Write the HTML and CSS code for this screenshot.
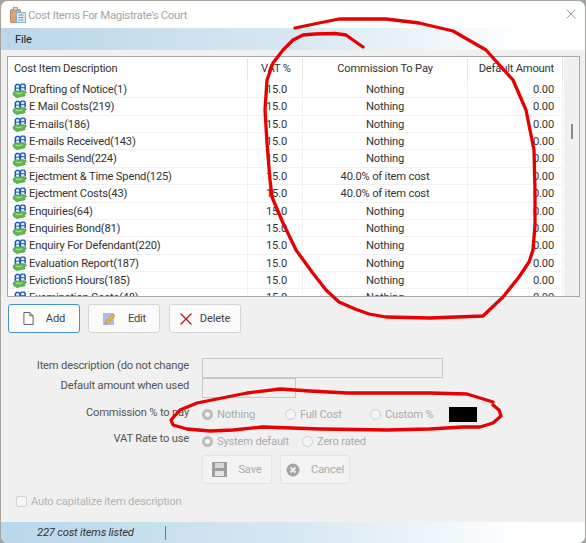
FILE: index.html
```html
<!DOCTYPE html>
<html lang="en">
<head>
<meta charset="utf-8">
<title>Cost Items For Magistrate's Court</title>
<link rel="stylesheet" href="styles.css">
</head>
<body>
<svg class="defs" width="0" height="0" aria-hidden="true">
  <symbol id="item" viewBox="0 0 16 16">
    <path d="M3.500 9V3l1.500-1.500h2L8.500 3v6" fill="#dfeeff" stroke="#1c54b8" stroke-width="1.500"/>
    <path d="M9 8V2.500l1-1.300h3l1 1.300V8" fill="#dfeeff" stroke="#1c54b8" stroke-width="1.500"/>
    <path d="M3.500 5.500h5M9 5h5" stroke="#1c54b8" stroke-width="1"/>
    <path d="M1 11l2.500-3 4 1 3.500-1 4.500 1.500-2 2.500 .5 1.500-9 2-3-2z" fill="#62b94c" stroke="#3d9138" stroke-width=".7"/>
    <path d="M4 10.500l3 1 4-1" fill="none" stroke="#b9e8a3" stroke-width="1"/>
  </symbol>
</svg>
<div class="window">
  <header class="titlebar">
    <svg class="appicon" viewBox="0 0 16 16" width="16" height="16" aria-hidden="true">
      <rect x=".5" y="2.500" width="10" height="13" rx="1" fill="#dfa177" stroke="#c08258"/>
      <rect x="3.500" y="0.500" width="4" height="3" fill="#d8c8b8" stroke="#9a8a7a" stroke-width=".7"/>
      <rect x="6.500" y="5.500" width="9" height="10" fill="#e4e8ec" stroke="#7fb2d0"/>
      <path d="M8.500 8h5M8.500 10.500h5M8.500 13h5" stroke="#858f98"/>
    </svg>
    <span class="title">Cost Items For Magistrate's Court</span>
    <svg class="close" viewBox="0 0 10 10" width="10" height="10" aria-hidden="true"><path d="M.5.5l9 9M9.500.5l-9 9" stroke="#9a9a9a" stroke-width="1"/></svg>
  </header>
  <nav class="menubar"><span>File</span></nav>

  <section class="list">
    <div class="listmain">
      <div class="row head">
        <div class="c1">Cost Item Description</div><div class="c2">VAT %</div><div class="c3">Commission To Pay</div><div class="c4">Default Amount</div>
      </div>
      <div class="rows">
        <div class="row"><div class="c1"><svg class="ico"><use href="#item"/></svg>Drafting of Notice(1)</div><div class="c2">15.0</div><div class="c3">Nothing</div><div class="c4">0.00</div></div>
        <div class="row"><div class="c1"><svg class="ico"><use href="#item"/></svg>E Mail Costs(219)</div><div class="c2">15.0</div><div class="c3">Nothing</div><div class="c4">0.00</div></div>
        <div class="row"><div class="c1"><svg class="ico"><use href="#item"/></svg>E-mails(186)</div><div class="c2">15.0</div><div class="c3">Nothing</div><div class="c4">0.00</div></div>
        <div class="row"><div class="c1"><svg class="ico"><use href="#item"/></svg>E-mails Received(143)</div><div class="c2">15.0</div><div class="c3">Nothing</div><div class="c4">0.00</div></div>
        <div class="row"><div class="c1"><svg class="ico"><use href="#item"/></svg>E-mails Send(224)</div><div class="c2">15.0</div><div class="c3">Nothing</div><div class="c4">0.00</div></div>
        <div class="row"><div class="c1"><svg class="ico"><use href="#item"/></svg>Ejectment &amp; Time Spend(125)</div><div class="c2">15.0</div><div class="c3">40.0% of item cost</div><div class="c4">0.00</div></div>
        <div class="row"><div class="c1"><svg class="ico"><use href="#item"/></svg>Ejectment Costs(43)</div><div class="c2">15.0</div><div class="c3">40.0% of item cost</div><div class="c4">0.00</div></div>
        <div class="row"><div class="c1"><svg class="ico"><use href="#item"/></svg>Enquiries(64)</div><div class="c2">15.0</div><div class="c3">Nothing</div><div class="c4">0.00</div></div>
        <div class="row"><div class="c1"><svg class="ico"><use href="#item"/></svg>Enquiries Bond(81)</div><div class="c2">15.0</div><div class="c3">Nothing</div><div class="c4">0.00</div></div>
        <div class="row"><div class="c1"><svg class="ico"><use href="#item"/></svg>Enquiry For Defendant(220)</div><div class="c2">15.0</div><div class="c3">Nothing</div><div class="c4">0.00</div></div>
        <div class="row"><div class="c1"><svg class="ico"><use href="#item"/></svg>Evaluation Report(187)</div><div class="c2">15.0</div><div class="c3">Nothing</div><div class="c4">0.00</div></div>
        <div class="row"><div class="c1"><svg class="ico"><use href="#item"/></svg>Eviction5 Hours(185)</div><div class="c2">15.0</div><div class="c3">Nothing</div><div class="c4">0.00</div></div>
        <div class="row"><div class="c1"><svg class="ico"><use href="#item"/></svg>Examination Costs(48)</div><div class="c2">15.0</div><div class="c3">Nothing</div><div class="c4">0.00</div></div>
      </div>
    </div>
    <div class="scrollbar"><div class="thumb"></div></div>
  </section>

  <div class="actions">
    <button class="btn primary" type="button">
      <svg viewBox="0 0 12 14" width="11" height="13" aria-hidden="true"><path d="M1 .5h6.500l3.500 3.500v9.500H1z" fill="#fff" stroke="#555"/><path d="M7.500.5V4H11" fill="none" stroke="#555"/></svg>
      <span>Add</span>
    </button>
    <button class="btn" type="button">
      <svg viewBox="0 0 14 14" width="14" height="14" aria-hidden="true"><rect x="1" y="1" width="11" height="12" fill="#a9bde6"/><path d="M3 12l1-3 7-7 2 2-7 7z" fill="#efb54a" stroke="#c98a26" stroke-width=".7"/></svg>
      <span>Edit</span>
    </button>
    <button class="btn del" type="button">
      <svg viewBox="0 0 12 12" width="12" height="12" aria-hidden="true"><path d="M.5.500l11 11M11.500.5l-11 11" stroke="#b01e1e" stroke-width="1.300"/></svg>
      <span>Delete</span>
    </button>
  </div>

  <form class="form">
    <div class="frow r1"><label>Item description (do not change</label><div class="field wide"></div></div>
    <div class="frow r2"><label>Default amount when used</label><div class="field short"></div></div>
    <div class="frow r3">
      <label>Commission % to pay</label>
      <div class="radios">
        <span class="opt o1"><i class="radio on"></i>Nothing</span>
        <span class="opt o2"><i class="radio"></i>Full Cost</span>
        <span class="opt o3"><i class="radio"></i>Custom %</span>
        <span class="swatch"></span>
      </div>
    </div>
    <div class="frow r4">
      <label>VAT Rate to use</label>
      <div class="radios">
        <span class="opt o4"><i class="radio on"></i>System default</span>
        <span class="opt"><i class="radio"></i>Zero rated</span>
      </div>
    </div>
    <div class="frow r5">
      <label></label>
      <div class="savebtns">
        <button class="btn off" type="button">
          <svg viewBox="0 0 15 15" width="15" height="15" aria-hidden="true"><path d="M0 0h15v15H0z" fill="#9c9c9c"/><rect x="3" y="1" width="9" height="5" fill="#d6d6d6"/><rect x="3" y="9" width="9" height="5" fill="#e2e2e2"/></svg>
          <span>Save</span>
        </button>
        <button class="btn off" type="button">
          <svg viewBox="0 0 14 14" width="14" height="14" aria-hidden="true"><circle cx="7" cy="7" r="6.500" fill="#a3a3a3"/><path d="M4.500 4.500l5 5M9.500 4.500l-5 5" stroke="#eee" stroke-width="1.800"/></svg>
          <span>Cancel</span>
        </button>
      </div>
    </div>
    <div class="check"><i class="box"></i>Auto capitalize item description</div>
  </form>

  <footer class="status"><span class="stext">227 cost items listed</span><span class="sep"></span></footer>
</div>

<svg class="ink" viewBox="0 0 586 543" width="586" height="543" aria-hidden="true">
  <path d="M363 47L353 40 346 35 335 33.500 315 34 303 35 293 40 283 50 273 63 267 80 265 110 267 143 270 180 272 197 283 223 296 250 312 272 326 290 339 302 355 309 369 314 386 317 430 318 483 316 503 297 519 277 529 262 533 250 535 225 535 190 534 150 526 110 513 80 486 50 453 31 419 23 386 19 339 19 319 23 295 28"/>
  <path d="M493 402L467 394 430 393 387 393 347 393 310 391 280 389 247 393 222 398 197 403 180 410 171 420 173 425 187 429 210 431 233 430 263 427 320 429 387 430 430 429 463 427 480 427 493 423 501 416 499 410 493 405"/>
</svg>
</body>
</html>
```
FILE: styles.css
```css
* { box-sizing: border-box; }
html, body { margin: 0; height: 100%; overflow: hidden; }
body {
  position: relative;
  background: #a8a29c;
  font-family: Roboto, "Open Sans", "Liberation Sans", sans-serif;
  font-size: 11.200px;
  letter-spacing: -0.2px;
  color: #333;
}
.defs { position: absolute; }
.window {
  width: 584px;
  height: 542px;
  margin: 1px 0 0 1px;
  background: #f0f0f0;
  border-radius: 7px;
  display: flex;
  flex-direction: column;
  overflow: hidden;
}
.titlebar {
  height: 27px;
  flex: none;
  background: #fff;
  display: flex;
  align-items: center;
  padding: 0 9px;
}
.appicon { flex: none; }
.title { margin-left: 2px; color: #a5a5a5; font-size: 11.500px; letter-spacing: -0.38px; flex: 1; }
.close { margin-top: -1px; }
.menubar {
  height: 22px;
  flex: none;
  background: linear-gradient(to right, #b9d7e9 0%, #d6e7f2 50%, #ffffff 90%);
  display: flex;
  align-items: center;
  padding-left: 14px;
  color: #222;
}
.list {
  flex: none;
  margin: 6px 0 0 6px;
  width: 573px;
  height: 241px;
  border: 1px solid #a4a8ab;
  background: #fff;
  display: flex;
  overflow: hidden;
}
.listmain { width: 555px; flex: none; display: flex; flex-direction: column; }
.row {
  display: grid;
  grid-template-columns: 240px 55px 165px 95px;
  height: 17.370px;
  align-items: center;
  border-bottom: 1px solid #f1f1f1;
  line-height: 16px;
  white-space: nowrap;
}
.head { height: 24px; border-bottom: 0; flex: none; }
.rows { overflow: hidden; flex: 1; }
.row > div { height: 100%; display: flex; align-items: center; border-right: 1px solid #f1f1f1; }
.rows .row > div { padding-top: 1px; }
.head > div { border-right-color: #e6e6e6; height: 23px; }
.c1 { padding-left: 6px; }
.rows .c1 { padding-left: 4px; }
.c2 { padding-left: 18px; }
.head .c2 { padding-left: 13px; }
.c3 { justify-content: center; }
.c4 { justify-content: flex-end; padding-right: 8px; }
.ico { width: 15px; height: 15px; margin-right: 2px; flex: none; }
.scrollbar { width: 16px; flex: none; background: #f0f0f0; margin-left: 1px; display: flex; justify-content: center; }
.thumb { width: 2px; height: 15px; margin-top: 67px; background: #8a8a8a; }
.actions { flex: none; display: flex; gap: 8px; margin: 7px 0 0 7px; }
.btn {
  width: 72px;
  height: 29px;
  font: inherit;
  letter-spacing: inherit;
  color: #444;
  background: #fbfbfb;
  border: 1px solid #d4d4d4;
  border-radius: 3px;
  padding: 0;
  display: flex;
  align-items: center;
  justify-content: center;
  gap: 12px;
}
.del { gap: 8px; margin-left: 1px; }
.primary { border-color: #4a90d9; background: #fdfdfd; }
.off { width: 70px; height: 29px; color: #acacac; background: #f3f3f3; border-color: #e3e3e3; gap: 11px; }
.form { flex: none; margin-top: 25px; display: flex; flex-direction: column; }
.frow { display: flex; align-items: center; }
.frow label { width: 188px; flex: none; text-align: right; color: #555; margin-right: 13px; margin-bottom: 6px; }
.r1, .r2 { height: 20px; }
.r3 { height: 29px; margin-top: 2px; }
.r3 label { margin-bottom: 5px; }
.r4 { height: 24px; }
.r5 { height: 29px; margin-top: 2px; align-items: flex-start; }
.field { height: 20px; background: #f0f0f0; border: 1px solid #c8c8c8; }
.wide { width: 241px; }
.short { width: 94px; }
.radios { display: flex; align-items: center; color: #acacac; }
.opt { display: flex; align-items: center; gap: 4px; }
.o1 { width: 83px; }
.o2 { width: 85px; }
.o3 { width: 79px; }
.o4 { width: 100px; }
.radio { width: 11px; height: 11px; border-radius: 50%; border: 1px solid #cfcfcf; background: #f4f4f4; flex: none; }
.radio.on { border: 3px solid #bcbcbc; }
.swatch { width: 28px; height: 15px; background: #000; }
.savebtns { display: flex; gap: 8px; }
.check { margin: 11px 0 0 15px; display: flex; align-items: center; gap: 4px; color: #b4b4b4; }
.box { width: 11px; height: 11px; border: 1px solid #d2d2d2; border-radius: 2px; background: #f6f6f6; }
.status {
  margin-top: auto;
  height: 21px;
  flex: none;
  background: linear-gradient(to right, #b9d7e9 0%, #d6e7f2 50%, #ffffff 90%);
  display: flex;
  align-items: center;
}
.stext { margin-left: 36px; width: 128px; font-style: italic; color: #333; }
.sep { width: 1px; height: 14px; background: #777; }
.ink { position: absolute; left: 0; top: 0; pointer-events: none; }
.ink path { fill: none; stroke: #e60000; stroke-width: 3.300; stroke-linejoin: round; stroke-linecap: round; }
```
